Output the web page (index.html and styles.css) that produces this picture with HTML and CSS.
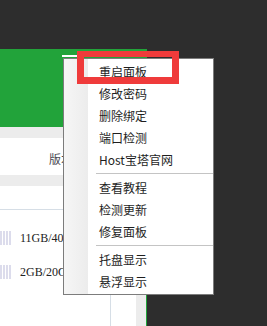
FILE: index.html
```html
<!DOCTYPE html>
<html lang="zh-CN">
<head>
    <meta charset="UTF-8">
    <meta name="viewport" content="width=device-width, initial-scale=1.0">
    <title>宝塔面板菜单</title>
    <link rel="stylesheet" href="styles.css">
</head>
<body>

    <div class="app">
        <!-- Green header with tab underline -->
        <div class="app-header">
            <div class="tab-line"></div>
        </div>

        <div class="app-body">
            <div class="content">
                <div class="band"></div>
                <div class="info-row">
                    <span class="info-label">版本</span>
                </div>
                <div class="band"></div>
                <div class="spacer"></div>

                <!-- Disk usage rows -->
                <div class="disk-list">
                    <div class="disk-row">
                        <span class="disk-bar"></span>
                        <span class="disk-text">11GB/40GB</span>
                    </div>
                    <div class="disk-row">
                        <span class="disk-bar"></span>
                        <span class="disk-text">2GB/20GB</span>
                    </div>
                </div>
            </div>
            <div class="scroll-col"></div>
        </div>
    </div>

    <!-- Tray context menu -->
    <div class="context-menu">
        <div class="menu-item">重启面板</div>
        <div class="menu-item">修改密码</div>
        <div class="menu-item">删除绑定</div>
        <div class="menu-item">端口检测</div>
        <div class="menu-item">Host宝塔官网</div>
        <div class="menu-sep"></div>
        <div class="menu-item">查看教程</div>
        <div class="menu-item">检测更新</div>
        <div class="menu-item">修复面板</div>
        <div class="menu-sep"></div>
        <div class="menu-item">托盘显示</div>
        <div class="menu-item">悬浮显示</div>
    </div>

    <!-- Highlight annotation -->
    <div class="highlight"></div>

</body>
</html>
```

FILE: styles.css
```css
/* Global Styles */
body {
    margin: 0;
    padding: 0;
    width: 267px;
    height: 326px;
    overflow: hidden;
    background: #2d2d2d;
    font-family: "Noto Sans CJK SC", "Noto Sans", sans-serif;
    position: relative;
}

/* App window behind the menu */
.app {
    margin-top: 49px;
    width: 146px;
    height: 277px;
    border-right: 1px solid #22a33a;
    background: #fff;
    display: flex;
    flex-direction: column;
}

.app-header {
    height: 78px;
    background: #22a33a;
    padding-top: 6px;
    box-sizing: border-box;
}

.tab-line {
    margin-left: 62px;
    width: 21px;
    height: 2px;
    background: #fff;
}

.app-body {
    flex: 1;
    display: flex;
}

.content {
    flex: 1;
    display: flex;
    flex-direction: column;
}

.band {
    height: 11px;
    background: #ececec;
}

.info-row {
    height: 37px;
    padding-left: 49px;
    display: flex;
    align-items: center;
    box-sizing: border-box;
    padding-top: 4px;
}

.info-label {
    font-size: 12px;
    color: #4a4a52;
    white-space: nowrap;
}

.spacer {
    height: 23px;
    border-bottom: 1px solid #d6dee6;
}

.disk-list {
    flex: 1;
    display: flex;
    flex-direction: column;
    gap: 20px;
    padding-top: 21px;
    border-right: 1px solid #d6dee6;
    width: 110px;
}

.disk-row {
    display: flex;
    align-items: center;
    gap: 8px;
    height: 14px;
}

.disk-bar {
    width: 12px;
    height: 14px;
    background: repeating-linear-gradient(to right, #dcdcec 0 2px, #fff 2px 3px);
}

.disk-text {
    font-family: "Liberation Serif", serif;
    font-size: 12px;
    color: #222;
    white-space: nowrap;
}

.scroll-col {
    width: 10px;
    background: #ececec;
}

/* Context menu */
.context-menu {
    position: absolute;
    left: 63px;
    top: 58px;
    width: 151px;
    box-sizing: border-box;
    border: 1px solid #7c7c7c;
    padding: 2px 0 1px;
    background: linear-gradient(to right, #f6f6f6 0, #ececec 24px, #fff 24px);
}

.menu-item {
    height: 22px;
    line-height: 22px;
    padding-left: 35px;
    font-size: 12px;
    color: #1e1e1e;
    white-space: nowrap;
}

.menu-sep {
    height: 1px;
    margin: 2px 0 3px 32px;
    background: #c4c4c4;
}

/* Red annotation box */
.highlight {
    position: absolute;
    left: 77px;
    top: 51px;
    width: 102px;
    height: 33px;
    box-sizing: border-box;
    border: 6px solid #ef3b3b;
    border-width: 6px 7px 7px 7px;
}
```
